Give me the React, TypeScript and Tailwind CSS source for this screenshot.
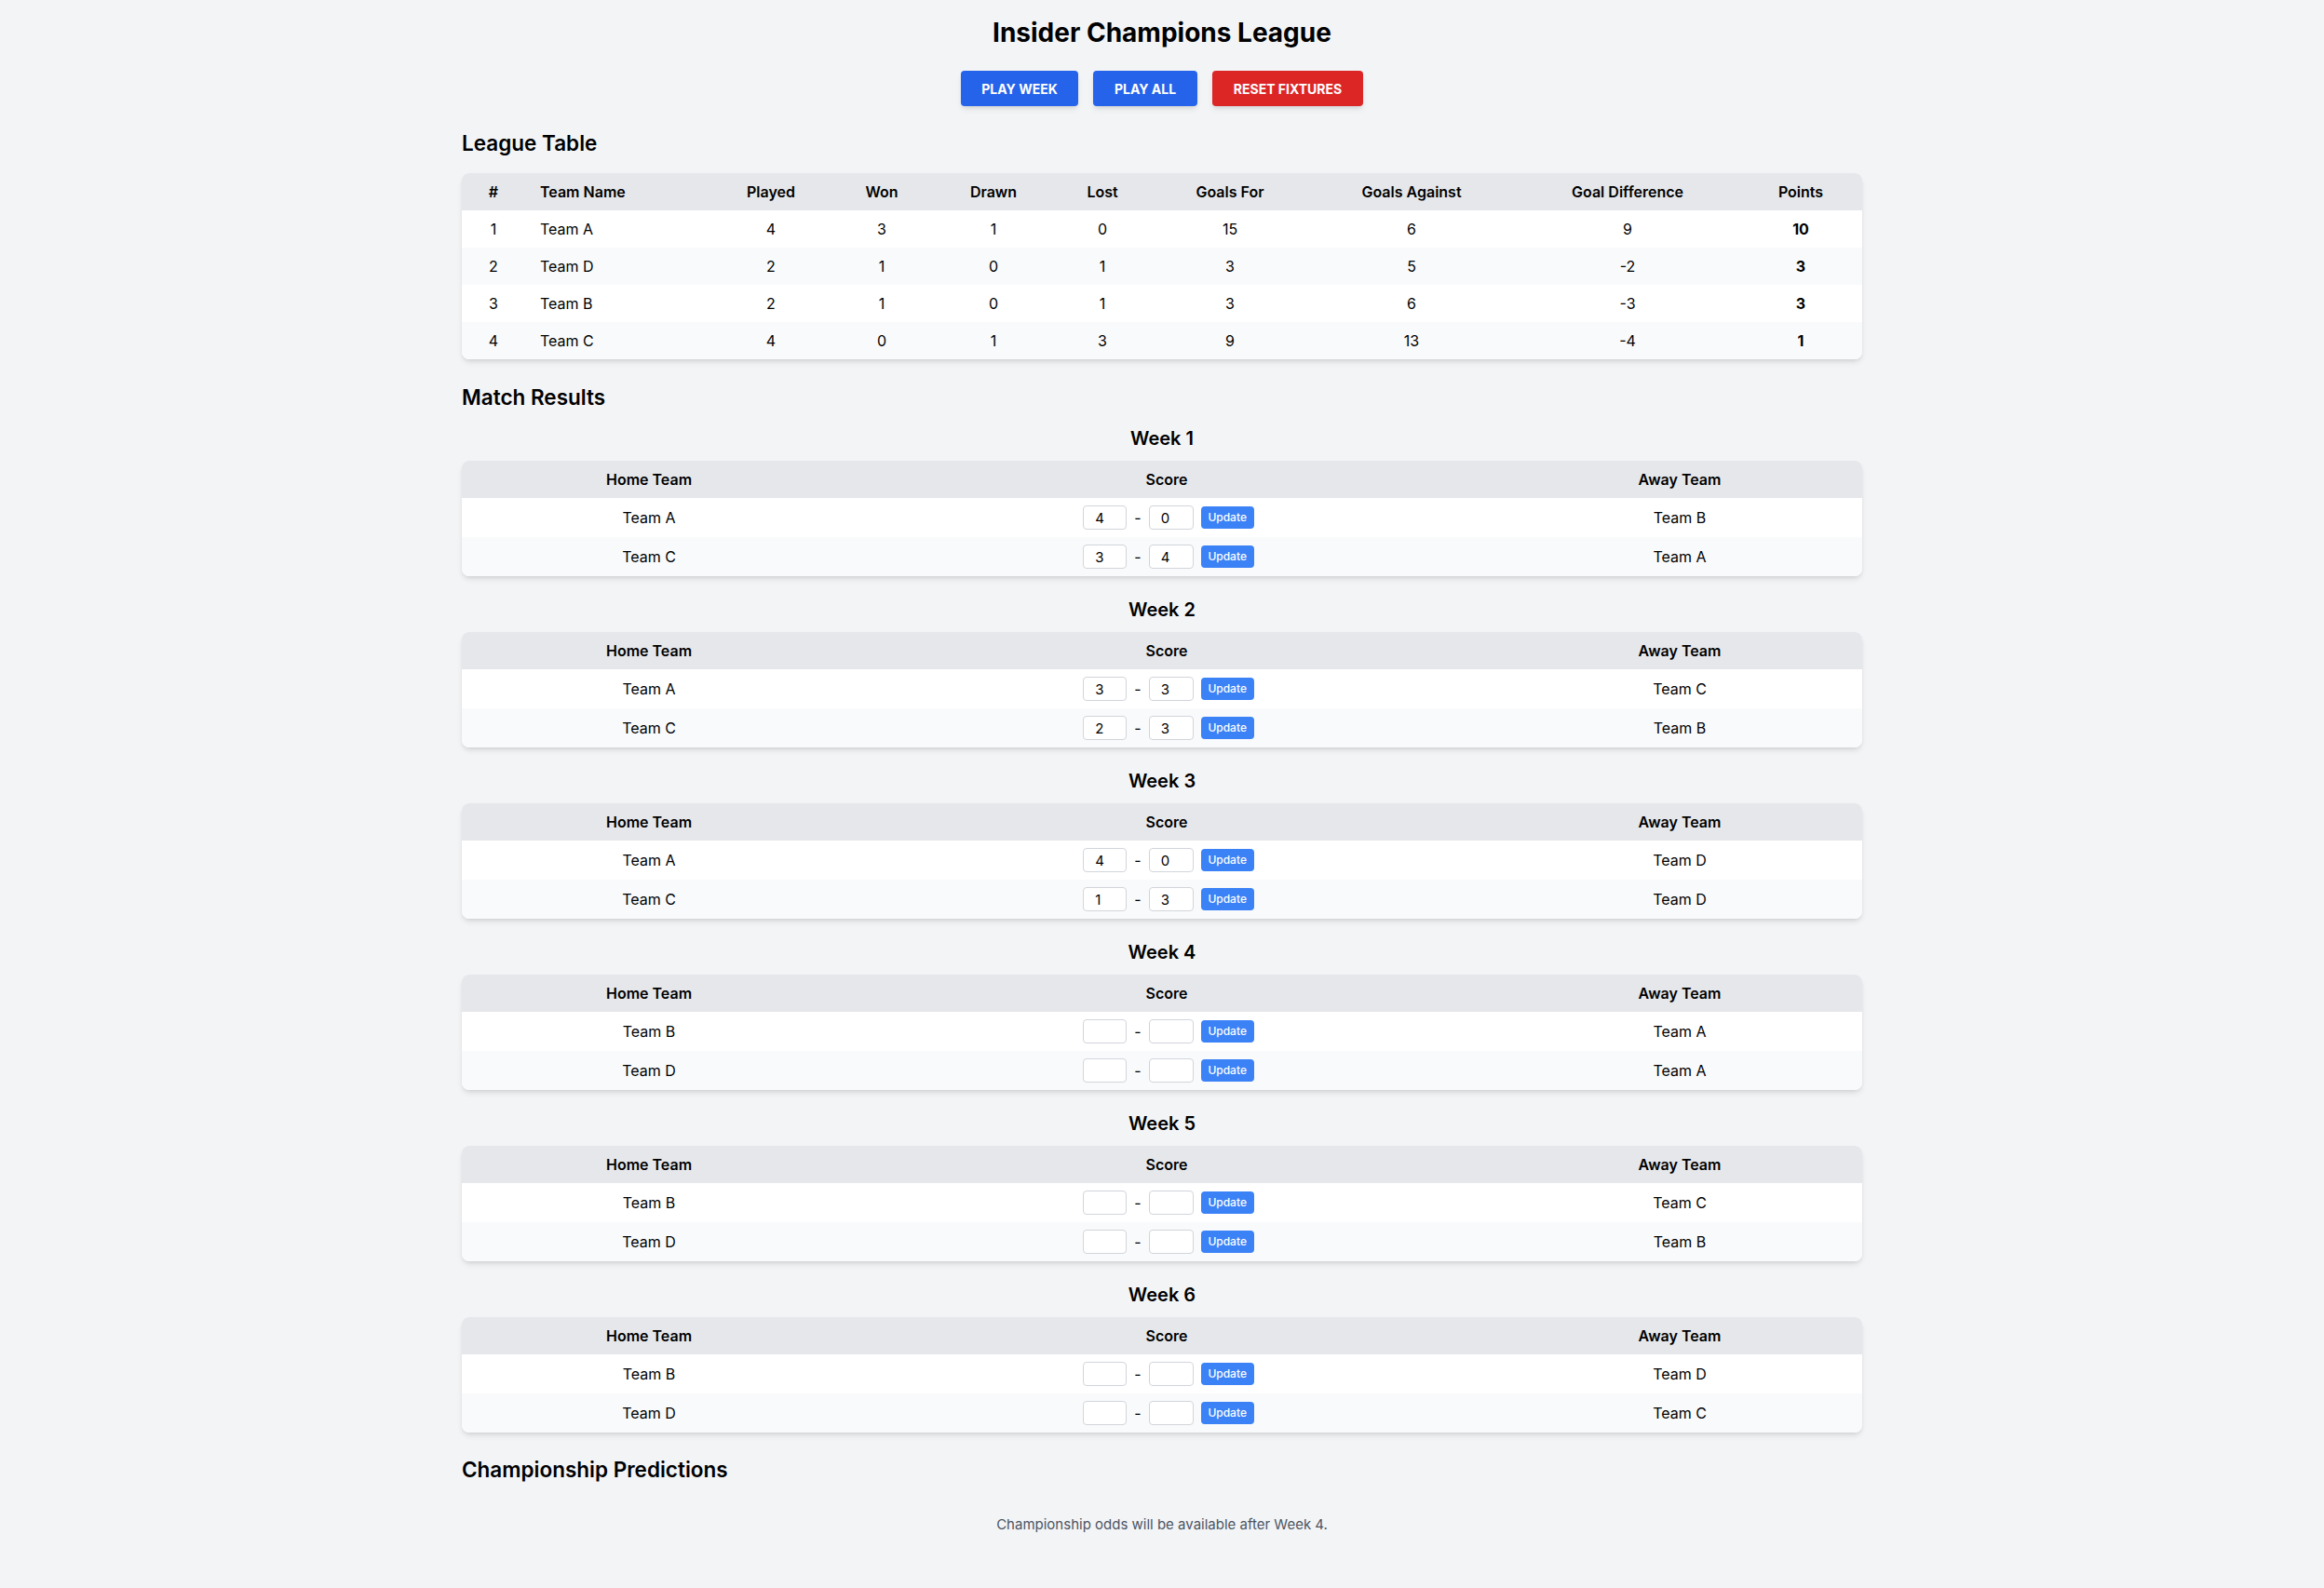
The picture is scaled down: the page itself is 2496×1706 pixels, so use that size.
import React from 'react';

type Standing = {
  pos: number;
  team: string;
  played: number;
  won: number;
  drawn: number;
  lost: number;
  gf: number;
  ga: number;
  gd: number;
  pts: number;
};

type Match = { home: string; away: string; hs: string; as: string };

const standings: Standing[] = [
  { pos: 1, team: 'Team A', played: 4, won: 3, drawn: 1, lost: 0, gf: 15, ga: 6, gd: 9, pts: 10 },
  { pos: 2, team: 'Team D', played: 2, won: 1, drawn: 0, lost: 1, gf: 3, ga: 5, gd: -2, pts: 3 },
  { pos: 3, team: 'Team B', played: 2, won: 1, drawn: 0, lost: 1, gf: 3, ga: 6, gd: -3, pts: 3 },
  { pos: 4, team: 'Team C', played: 4, won: 0, drawn: 1, lost: 3, gf: 9, ga: 13, gd: -4, pts: 1 },
];

const weeks: Match[][] = [
  [
    { home: 'Team A', away: 'Team B', hs: '4', as: '0' },
    { home: 'Team C', away: 'Team A', hs: '3', as: '4' },
  ],
  [
    { home: 'Team A', away: 'Team C', hs: '3', as: '3' },
    { home: 'Team C', away: 'Team B', hs: '2', as: '3' },
  ],
  [
    { home: 'Team A', away: 'Team D', hs: '4', as: '0' },
    { home: 'Team C', away: 'Team D', hs: '1', as: '3' },
  ],
  [
    { home: 'Team B', away: 'Team A', hs: '', as: '' },
    { home: 'Team D', away: 'Team A', hs: '', as: '' },
  ],
  [
    { home: 'Team B', away: 'Team C', hs: '', as: '' },
    { home: 'Team D', away: 'Team B', hs: '', as: '' },
  ],
  [
    { home: 'Team B', away: 'Team D', hs: '', as: '' },
    { home: 'Team D', away: 'Team C', hs: '', as: '' },
  ],
];

const LeagueTable: React.FC = () => (
  <div className="rounded-lg overflow-hidden shadow-md bg-white">
    <table className="w-full table-fixed text-[16px] leading-[20px] text-black">
      <thead className="bg-[#e5e7eb]">
        <tr className="h-[40px]">
          <th className="w-[68px] font-semibold">#</th>
          <th className="w-[202px] text-left pl-[16px] font-semibold">Team Name</th>
          <th className="w-[124px] font-semibold">Played</th>
          <th className="w-[114px] font-semibold">Won</th>
          <th className="w-[126px] font-semibold">Drawn</th>
          <th className="w-[108px] font-semibold">Lost</th>
          <th className="w-[166px] font-semibold">Goals For</th>
          <th className="w-[224px] font-semibold">Goals Against</th>
          <th className="w-[240px] font-semibold">Goal Difference</th>
          <th className="w-[132px] font-semibold">Points</th>
        </tr>
      </thead>
      <tbody>
        {standings.map((s, i) => (
          <tr key={s.team} className={`h-[40px] text-center ${i % 2 === 0 ? 'bg-white' : 'bg-[#f9fafb]'}`}>
            <td>{s.pos}</td>
            <td className="text-left pl-[16px]">{s.team}</td>
            <td>{s.played}</td>
            <td>{s.won}</td>
            <td>{s.drawn}</td>
            <td>{s.lost}</td>
            <td>{s.gf}</td>
            <td>{s.ga}</td>
            <td>{s.gd}</td>
            <td className="font-bold">{s.pts}</td>
          </tr>
        ))}
      </tbody>
    </table>
  </div>
);

const WeekTable: React.FC<{ week: number; matches: Match[] }> = ({ week, matches }) => (
  <div>
    <h3 className="text-center text-[20px] leading-[28px] font-semibold text-black mb-[10px]">Week {week}</h3>
    <div className="rounded-lg overflow-hidden shadow-md bg-white">
      <table className="w-full table-fixed text-[16px] leading-[20px] text-black">
        <thead className="bg-[#e5e7eb]">
          <tr className="h-[40px]">
            <th className="w-[402px] font-semibold">Home Team</th>
            <th className="w-[710px] font-semibold">Score</th>
            <th className="w-[392px] font-semibold">Away Team</th>
          </tr>
        </thead>
        <tbody>
          {matches.map((m, i) => (
            <tr key={i} className={`h-[42px] text-center ${i % 2 === 0 ? 'bg-white' : 'bg-[#f9fafb]'}`}>
              <td>{m.home}</td>
              <td>
                <div className="flex items-center justify-center gap-[8px] pl-[4px]">
                  <input
                    type="text"
                    defaultValue={m.hs}
                    className="w-[47px] h-[26px] px-[12px] border border-[#d1d5db] rounded-[4px] bg-white text-[15px] text-black outline-none"
                  />
                  <span>-</span>
                  <input
                    type="text"
                    defaultValue={m.as}
                    className="w-[48px] h-[26px] px-[12px] border border-[#d1d5db] rounded-[4px] bg-white text-[15px] text-black outline-none"
                  />
                  <button className="w-[57px] h-[24px] bg-[#3b82f6] text-white text-[12px] leading-[16px] font-medium rounded-[4px]">
                    Update
                  </button>
                </div>
              </td>
              <td>{m.away}</td>
            </tr>
          ))}
        </tbody>
      </table>
    </div>
  </div>
);

export default function App() {
  return (
    <div className="min-h-screen bg-[#f3f4f6] font-['Inter',sans-serif] text-black">
      <div className="w-[1504px] mx-auto pt-[17px] pb-[40px]">
        <h1 className="text-center text-[28px] leading-[36px] font-bold text-black">Insider Champions League</h1>

        <div className="flex justify-center gap-[16px] mt-[23px]">
          <button className="w-[126px] h-[38px] bg-[#2563eb] text-white text-[14px] font-bold uppercase rounded-[4px] shadow-md">
            Play Week
          </button>
          <button className="w-[112px] h-[38px] bg-[#2563eb] text-white text-[14px] font-bold uppercase rounded-[4px] shadow-md">
            Play All
          </button>
          <button className="w-[162px] h-[38px] bg-[#dc2626] text-white text-[14px] font-bold uppercase rounded-[4px] shadow-md">
            Reset Fixtures
          </button>
        </div>

        <section className="mt-[25px]">
          <h2 className="text-[22.5px] leading-[30px] font-semibold mb-[17px]">League Table</h2>
          <LeagueTable />
        </section>

        <section className="mt-[26px]">
          <h2 className="text-[22.5px] leading-[30px] font-semibold mb-[15px]">Match Results</h2>
          <div className="flex flex-col gap-[22px]">
            {weeks.map((m, i) => (
              <WeekTable key={i} week={i + 1} matches={m} />
            ))}
          </div>
        </section>

        <section className="mt-[25px]">
          <h2 className="text-[22.5px] leading-[30px] font-semibold">Championship Predictions</h2>
          <p className="mt-[34px] text-center text-[15px] leading-[20px] text-[#4b5563]">
            Championship odds will be available after Week 4.
          </p>
        </section>
      </div>
    </div>
  );
}
